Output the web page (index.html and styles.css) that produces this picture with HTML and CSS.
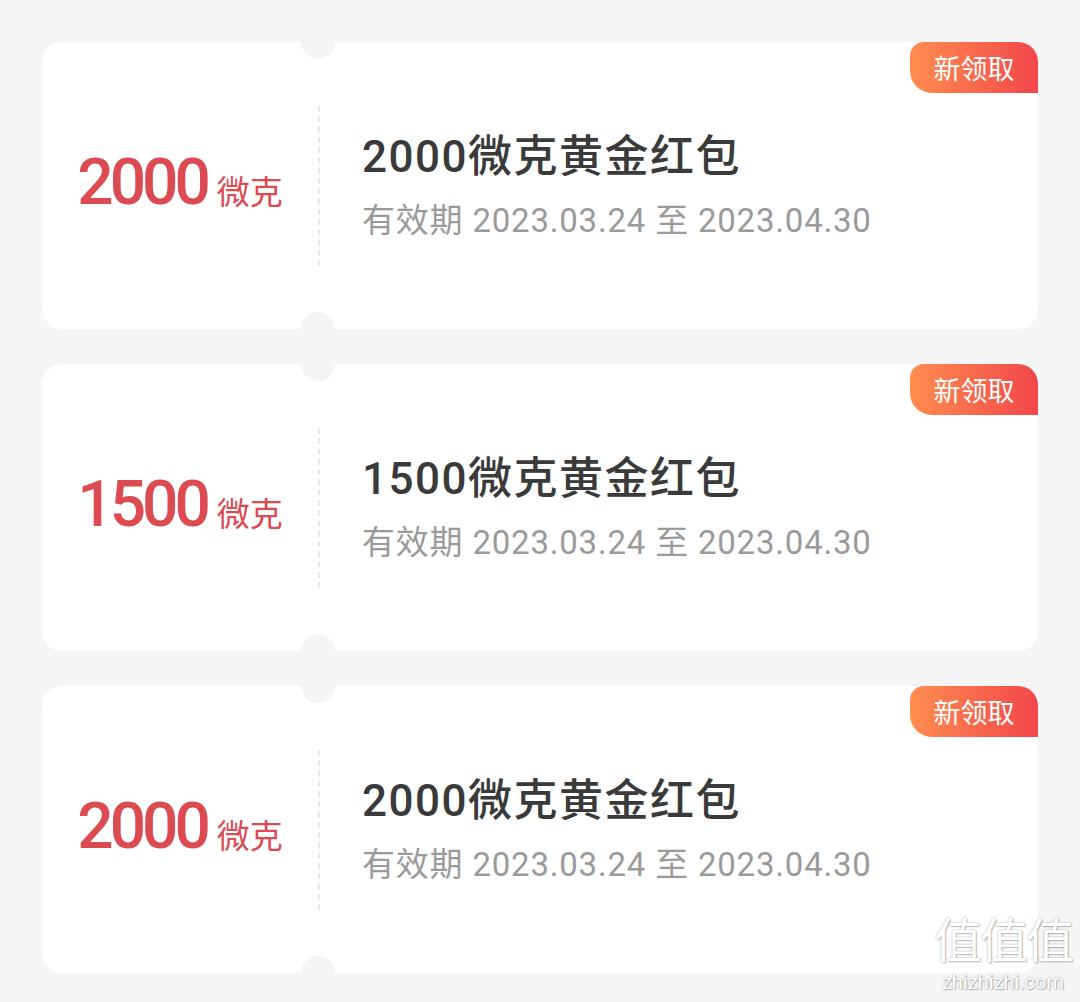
FILE: index.html
```html
<!DOCTYPE html>
<html lang="zh-CN">
<head>
  <meta charset="UTF-8">
  <meta name="viewport" content="width=device-width, initial-scale=1.0">
  <title>黄金红包</title>
  <link rel="stylesheet" href="styles.css">
</head>
<body>
  <div class="container">
    <div class="coupon">
      <div class="amount"><span class="num">2000</span><span class="unit">微克</span></div>
      <div class="divider"></div>
      <div class="info">
        <div class="title">2000微克黄金红包</div>
        <div class="date">有效期 2023.03.24 至 2023.04.30</div>
      </div>
      <div class="badge">新领取</div>
    </div>

    <div class="coupon">
      <div class="amount"><span class="num">1500</span><span class="unit">微克</span></div>
      <div class="divider"></div>
      <div class="info">
        <div class="title">1500微克黄金红包</div>
        <div class="date">有效期 2023.03.24 至 2023.04.30</div>
      </div>
      <div class="badge">新领取</div>
    </div>

    <div class="coupon">
      <div class="amount"><span class="num">2000</span><span class="unit">微克</span></div>
      <div class="divider"></div>
      <div class="info">
        <div class="title">2000微克黄金红包</div>
        <div class="date">有效期 2023.03.24 至 2023.04.30</div>
      </div>
      <div class="badge">新领取</div>
    </div>
  </div>

  <div class="watermark">
    <div class="wm-logo">值值值</div>
    <div class="wm-site">zhizhizhi.com</div>
  </div>
</body>
</html>
```

FILE: styles.css
```css
body {
  margin: 0;
  padding: 0;
  font-family: Roboto, "Noto Sans CJK SC", sans-serif;
  background-color: #f5f5f5;
}

.container {
  display: flex;
  flex-direction: column;
  gap: 35px;
  padding: 42px 42px 0 42px;
}

.coupon {
  position: relative;
  display: flex;
  align-items: center;
  height: 287px;
  background-color: #ffffff;
  border-radius: 20px;
}

/* the two half-circle cut-outs on top and bottom */
.coupon::before,
.coupon::after {
  content: "";
  position: absolute;
  left: 259px;
  width: 34px;
  height: 34px;
  border-radius: 50%;
  background-color: #f5f5f5;
}

.coupon::before {
  top: -17px;
}

.coupon::after {
  bottom: -17px;
}

.amount {
  width: 276px;
  display: flex;
  justify-content: center;
  align-items: baseline;
  color: #dc4a52;
  margin-top: -6px;
}

.num {
  font-size: 64px;
  font-weight: 500;
  letter-spacing: -4px;
}

.unit {
  font-size: 33px;
  margin-left: 10px;
}

.divider {
  height: 160px;
  border-left: 2px dashed #e8e8e8;
  margin-top: 1px;
}

.info {
  padding-left: 42px;
}

.title {
  font-size: 44px;
  font-weight: 500;
  color: #3a3a3a;
  line-height: 52px;
  letter-spacing: 1.5px;
}

.date {
  font-size: 33px;
  color: #9a9a9a;
  line-height: 40px;
  margin-top: 18px;
  letter-spacing: 0.8px;
}

.badge {
  position: absolute;
  top: 0;
  right: 0;
  width: 128px;
  height: 51px;
  display: flex;
  justify-content: center;
  align-items: center;
  font-size: 27px;
  color: #ffffff;
  border-radius: 14px 20px 0 22px;
  background: linear-gradient(to right, #ff8d4f, #f2464b);
}

.watermark {
  position: absolute;
  right: 8px;
  top: 914px;
  color: #ffffff;
  text-align: center;
  text-shadow: 0 0 2px rgba(0, 0, 0, 0.35), 1px 1px 1px rgba(0, 0, 0, 0.2);
}

.wm-logo {
  font-size: 48px;
  line-height: 56px;
  letter-spacing: -2px;
}

.wm-site {
  font-size: 20px;
  line-height: 24px;
}
```
